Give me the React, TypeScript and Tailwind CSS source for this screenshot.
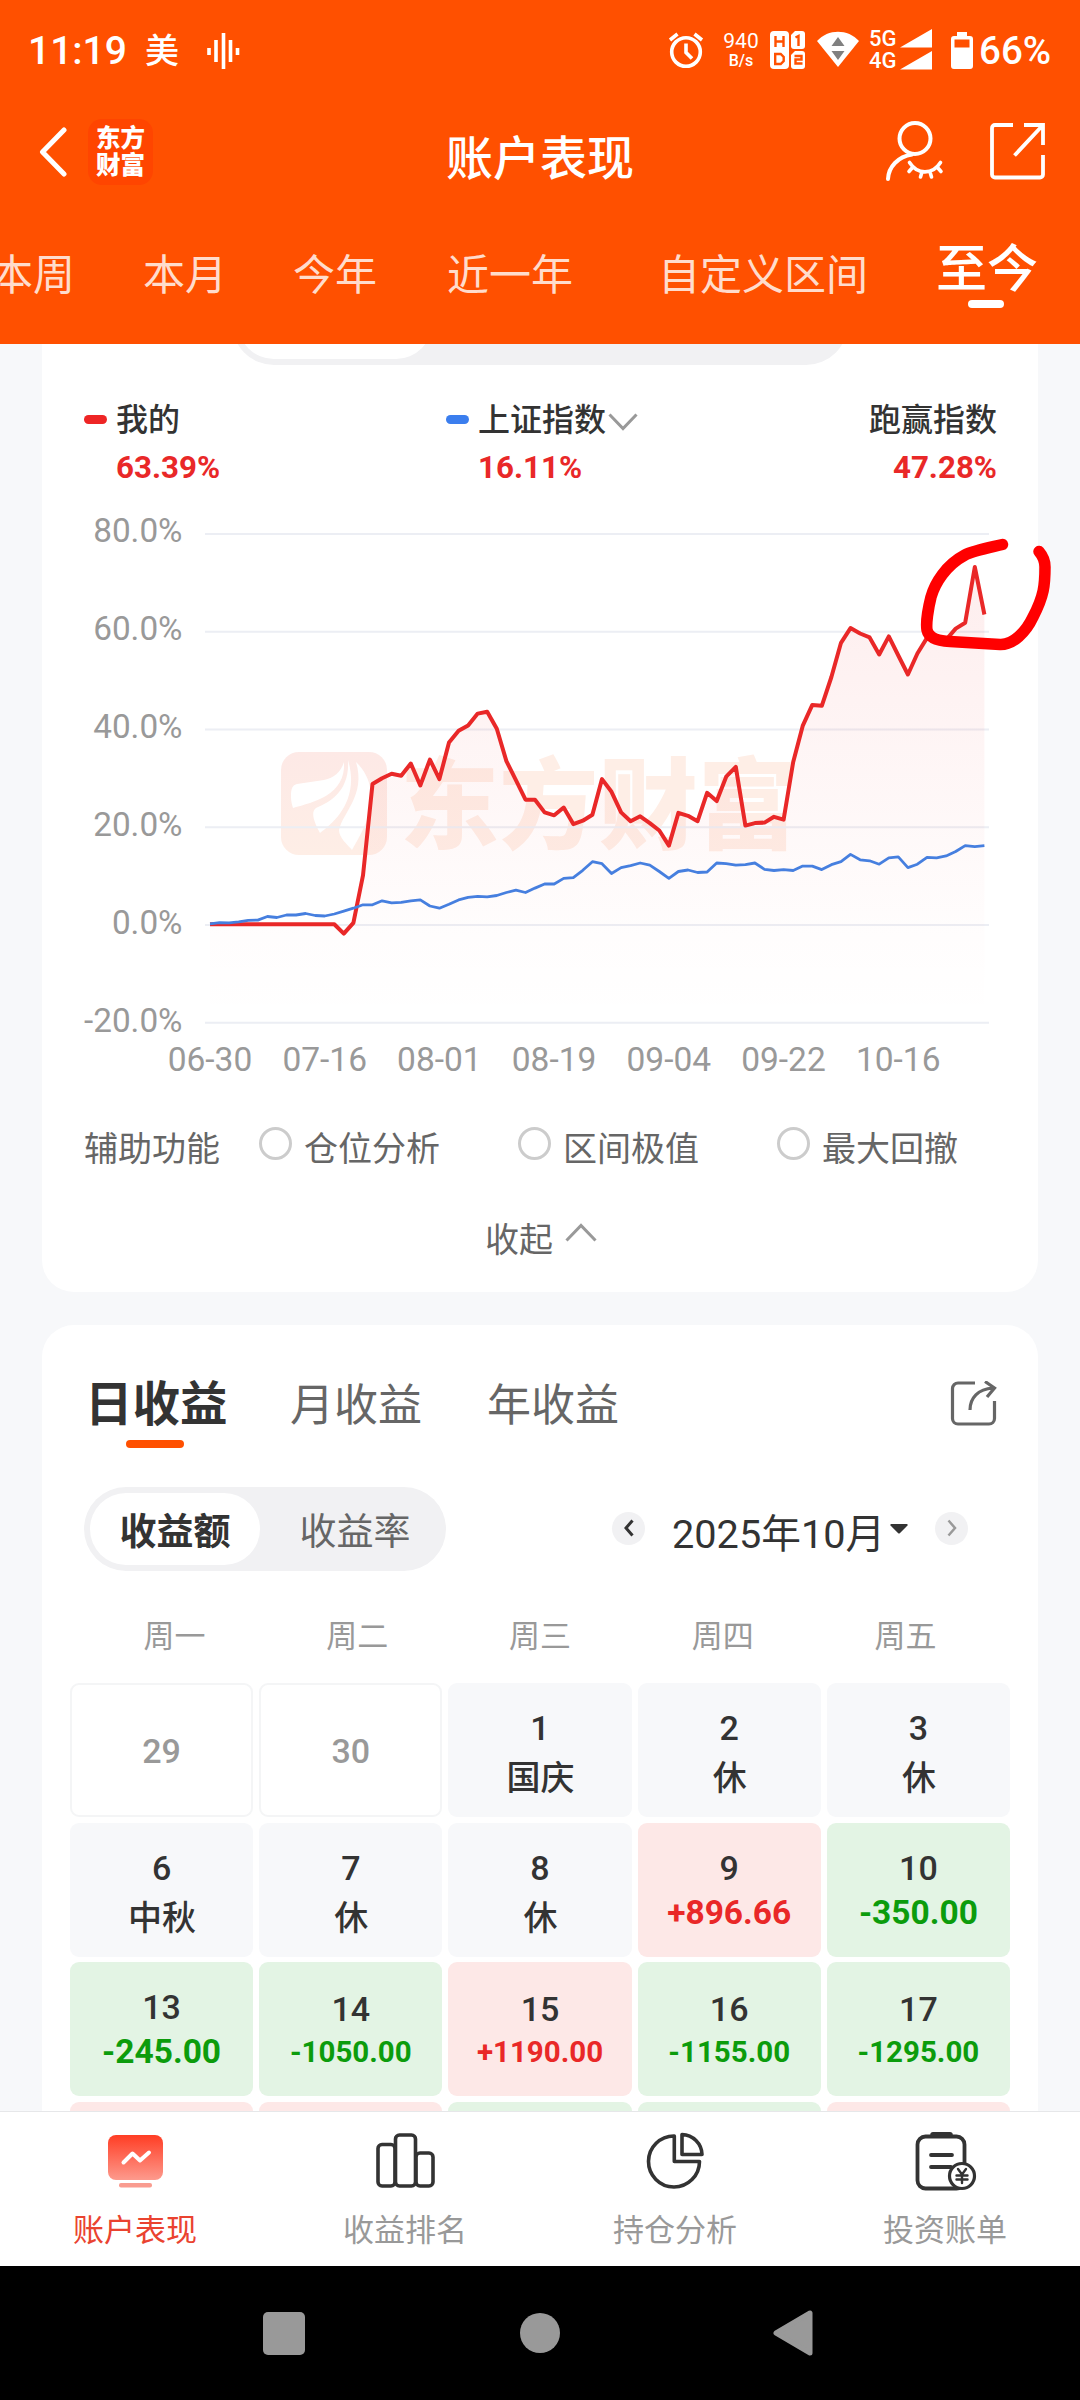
import { useState } from 'react'

const RANGES = ['本周', '本月', '今年', '近一年', '自定义区间', '至今']
const WEEKDAYS = ['周一', '周二', '周三', '周四', '周五']
const DATES = ['06-30', '07-16', '08-01', '08-19', '09-04', '09-22', '10-16']
const LEVELS = [80, 60, 40, 20, 0, -20]

const MINE = [
  0, 0, 0, 0, 0, 0, 0, 0, 0, 0, 0, 0, 0, 0, -1.9, 0.3, 10, 28.7, 29.9, 30.8, 30.4, 32.9, 28.4, 33.7, 29.7, 37.2, 39.6,
  40.7, 43.1, 43.5, 40, 33.4, 29.5, 25.5, 25.5, 22.9, 22.3, 23.9, 20.5, 21.2, 22.4, 29.7, 27.1, 22.9, 21.1, 22.1, 20.7,
  19.2, 16.1, 22.8, 22.2, 21.1, 26.9, 25.2, 30.2, 32.2, 20.2, 20.7, 20.8, 22, 21.4, 33.2, 40.6, 44.9, 44.7, 50.6, 57.6,
  60.6, 59.5, 58.7, 55.2, 58.9, 55, 51.1, 55.4, 58.6, 58.2, 58.2, 60.5, 61.7, 73.1, 63.39,
]

const INDEX = [
  0.1, 0.35, 0.3, 0.5, 0.8, 0.85, 1.6, 1.4, 1.9, 1.9, 2.2, 1.8, 1.7, 2.1, 2.7, 3.3, 4, 4, 4.8, 4.4, 4.5, 4.8, 5, 3.75,
  3.3, 4.1, 5, 5.5, 5.7, 5.6, 5.9, 6.5, 7, 6.5, 7.4, 8.25, 8.25, 9.4, 9.55, 11.05, 12.8, 12.4, 10.4, 11.6, 12, 12.55,
  12.1, 10.8, 9.4, 10.8, 11.1, 10.6, 10.7, 12.55, 12.4, 12.1, 12.2, 12.55, 11.25, 11, 11.2, 11, 11.9, 11.9, 11.2, 12.2,
  12.8, 14.3, 13.2, 13, 12.3, 13.6, 13.8, 11.6, 12.3, 13.7, 13.6, 14, 14.9, 16.1, 15.9, 16.11,
]

const DAYS: any[] = [
  { day: 29, kind: 'out' },
  { day: 30, kind: 'out' },
  { day: 1, kind: 'rest', text: '国庆' },
  { day: 2, kind: 'rest', text: '休' },
  { day: 3, kind: 'rest', text: '休' },
  { day: 6, kind: 'rest', text: '中秋' },
  { day: 7, kind: 'rest', text: '休' },
  { day: 8, kind: 'rest', text: '休' },
  { day: 9, kind: 'up', text: '+896.66' },
  { day: 10, kind: 'down', text: '-350.00' },
  { day: 13, kind: 'down', text: '-245.00' },
  { day: 14, kind: 'down', text: '-1050.00' },
  { day: 15, kind: 'up', text: '+1190.00' },
  { day: 16, kind: 'down', text: '-1155.00' },
  { day: 17, kind: 'down', text: '-1295.00' },
  { kind: 'up' },
  { kind: 'up' },
  { kind: 'down' },
  { kind: 'down' },
  { kind: 'up' },
]

const CELL: any = {
  out: 'border-2 border-[#f4f5f6] text-[#999]',
  rest: 'bg-[#f7f8fa] text-[#333]',
  up: 'bg-[#fde8e7] text-[#e92828]',
  down: 'bg-[#e3f4e4] text-[#0c9c0c]',
}

const px = (i: number) => 210 + i * 9.56
const py = (v: number) => 924.3 - v * 4.8875
const toPoints = (data: number[]) => data.map((v, i) => `${px(i).toFixed(1)},${py(v).toFixed(1)}`).join(' ')

function StatusBar() {
  return (
    <div className="flex h-[102px] items-center pl-[28px] text-white">
      <span className="w-[100px] text-[39px] leading-none font-medium">11:19</span>
      <span className="ml-[17px] w-[36px] text-[34px] leading-none font-medium">美</span>
      <svg className="ml-[25px]" width="36" height="38" viewBox="0 0 36 38" stroke="white" strokeWidth="3.6">
        <path d="M3 16v7M10 8v22M17.500 1v36M24.500 8v22M31.500 16v7" />
      </svg>
      <svg className="-mt-[3px] ml-[426px] shrink-0" width="36" height="38" viewBox="0 0 36 38" fill="none" stroke="white" strokeWidth="3.6">
        <circle cx="18" cy="21" r="14.300" />
        <path d="M18 12.500v9l6 6M2 9l7.500-6M34 9l-7.500-6" />
      </svg>
      <div className="ml-[15px] flex w-[44px] flex-col items-center">
        <span className="text-[21px] leading-[20px]">940</span>
        <span className="text-[16px] leading-[20px] font-medium">B/s</span>
      </div>
      <svg className="-mt-[3px] ml-[7px] shrink-0" width="36" height="38" viewBox="0 0 36 38">
        <rect x="0" y="0" width="19" height="38" rx="4" fill="white" />
        <path d="M21 4l4-4h7a3 3 0 0 1 3 3v12a3 3 0 0 1-3 3h-8a3 3 0 0 1-3-3z" fill="white" />
        <path d="M21 24l4-4h7a3 3 0 0 1 3 3v12a3 3 0 0 1-3 3h-8a3 3 0 0 1-3-3z" fill="white" />
        <g fill="none" stroke="#ff5000" strokeWidth="2.400">
          <path d="M5.500 5v11M13.500 5v11M5.500 10.500h8M5.200 23v10h5.500l3-3v-4l-3-3z" />
          <path d="M25.500 6.500l3-1.500v10M24.500 25h7v3.500h-6v4h7" />
        </g>
      </svg>
      <svg className="-mt-[4px] ml-[11px] shrink-0" width="42" height="36" viewBox="0 0 42 36">
        <path d="M0 10C11-2.500 31-2.500 42 10L21 36z" fill="white" />
        <path d="M21 6l6.500 9h-13zM21 29l6.500-9h-13z" fill="#808080" />
      </svg>
      <div className="-mt-[3px] ml-[10px] flex w-[29px] flex-col">
        <span className="text-[22px] leading-[22px] font-medium">5G</span>
        <span className="text-[22px] leading-[22px] font-medium">4G</span>
      </div>
      <svg className="-mt-[3px] ml-[2px] shrink-0" width="32" height="41" viewBox="0 0 32 41" fill="white">
        <path d="M32 0v18.500H0zM32 22v18.500H0z" />
      </svg>
      <svg className="-mt-[2px] ml-[19px] shrink-0" width="22" height="37" viewBox="0 0 22 37">
        <path d="M6 0h10v4h3a3 3 0 0 1 3 3v27a3 3 0 0 1-3 3H3a3 3 0 0 1-3-3V7a3 3 0 0 1 3-3h3z" fill="white" />
        <path d="M3.500 7.500h15v8h-15z" fill="#ff5000" />
      </svg>
      <span className="ml-[6px] text-[38.500px] leading-none font-medium">66%</span>
    </div>
  )
}

function TitleBar() {
  return (
    <div className="flex h-[100px] items-center pl-[38px] text-white">
      <svg width="30" height="50" viewBox="0 0 30 50" fill="none" stroke="white" strokeWidth="5" strokeLinecap="round" strokeLinejoin="round">
        <path d="M26 3L4.500 25 26 47" />
      </svg>
      <div className="ml-[20px] flex h-[66px] w-[65px] flex-col items-center justify-center rounded-[14px] bg-[#ff4500] text-[24.500px] leading-[27.500px] font-black">
        <span>东方</span>
        <span>财富</span>
      </div>
      <h1 className="ml-[293px] pt-[13px] text-[47px] leading-none font-medium">账户表现</h1>
      <svg className="ml-[251px] shrink-0" width="60" height="62" viewBox="0 0 60 62" fill="none" stroke="white" strokeWidth="4" strokeLinecap="round">
        <circle cx="30" cy="17.500" r="15.500" />
        <path d="M27 33.500C13 35.500 3.500 46 3 58" />
        <path d="M24.500 41.500c8 12.500 23 12.500 31 0M27.500 46.500l-3.500 4M37 51l-1.500 5M45 51l1.500 5M52.500 46.500l3.500 4" strokeWidth="3.600" />
      </svg>
      <svg className="-mt-[2px] ml-[45px] shrink-0" width="56" height="58" viewBox="0 0 56 58" fill="none" stroke="white" strokeWidth="3.800">
        <path d="M23 3H5a3 3 0 0 0-3 3v46.500a3 3 0 0 0 3 3h45a3 3 0 0 0 3-3V33M34 3h19v20M53 3L24.500 33.500" />
      </svg>
    </div>
  )
}

function RangeTabs() {
  const [active, setActive] = useState('至今')
  return (
    <div className="-ml-[9px] flex h-[142px] items-center gap-[68px] pt-[5px] whitespace-nowrap">
      {RANGES.map(r => (
        <button key={r} onClick={() => setActive(r)}
          className={`relative shrink-0 ${r === '自定义区间' ? 'ml-[17px]' : r === '今年' ? '-ml-[2px]' : r === '近一年' ? 'ml-[2px]' : ''} ${active === r ? '-mt-[12px] text-[51px] leading-none font-medium text-white' : 'text-[42px] leading-none text-[#ffdccc]'}`}>
          {r}
          {active === r && <span className="absolute -bottom-[13px] left-[32px] h-[8px] w-[36px] rounded-full bg-white" />}
        </button>
      ))}
    </div>
  )
}

function Chart() {
  const line = toPoints(MINE)
  return (
    <svg className="block overflow-visible" width="996" height="600" viewBox="42 490 996 600">
      <defs>
        <linearGradient id="area" gradientUnits="userSpaceOnUse" x1="0" y1="567" x2="0" y2="1022">
          <stop offset="0" stopColor="#ee2222" stopOpacity="0.080" />
          <stop offset="0.800" stopColor="#ee2222" stopOpacity="0.010" />
          <stop offset="1" stopColor="#ee2222" stopOpacity="0" />
        </linearGradient>
        <linearGradient id="mark" x1="0" y1="0" x2="0" y2="1">
          <stop offset="0" stopColor="#fde9e6" />
          <stop offset="1" stopColor="#feeee6" />
        </linearGradient>
      </defs>
      <rect x="281" y="752" width="106" height="103" rx="18" fill="url(#mark)" />
      <g fill="white">
        <path d="M344 762C341 772 334 778 324 780L297 784C291 785 291 792 291 797C291 801 292 805 293 808C314 802 346 795 344 762Z" />
        <path d="M348 760C350 790 331 802 316 808C309 813 317 827 320 833C334 823 360 800 348 760Z" />
        <path d="M356 762C366 795 343 812 339 830C339 838 348 845 352 850C360 836 366 824 369 815C373 800 373 778 356 762Z" />
      </g>
      <text x="400" y="841" fontSize="99" fontWeight="900" fill="#feeee6" textLength="397">东方财富</text>
      {LEVELS.map((v, i) => (
        <g key={v}>
          <rect x="205" y={533 + i * 97.75} width="784" height="2" fill="#eceef4" />
          <text x="182.500" y={542 + i * 97.900} textAnchor="end" fontSize="33.300" fill="#999">{v.toFixed(1)}%</text>
        </g>
      ))}
      {DATES.map((d, i) => (
        <text key={d} x={210 + i * 114.7} y="1071" textAnchor="middle" fontSize="33.500" fill="#999">{d}</text>
      ))}
      <polygon points={`210,1022 ${line} 984.400,1022`} fill="url(#area)" />
      <polyline points={line} fill="none" stroke="#e92828" strokeWidth="4" strokeLinejoin="round" />
      <polyline points={toPoints(INDEX)} fill="none" stroke="#467fdf" strokeWidth="2.800" strokeLinejoin="round" />
      <path d="M1002.500 544.500C988 548 973 551 965 555C946 565 935 583 931 597C928 609 926 624 927 630C929 639 939 641 950 641.500L1000 644.500C1013 645 1026 632 1033 617C1044 596 1045 585 1045 567C1045 560 1042 555 1039 551.500"
        fill="none" stroke="#ff0000" strokeWidth="11.500" strokeLinecap="round" strokeLinejoin="round" />
    </svg>
  )
}

function Performance() {
  return (
    <section className="h-[948px] rounded-b-[32px] bg-white">
      <div className="flex h-[21px] items-end justify-center overflow-hidden">
        <div className="flex h-[84px] w-[616px] shrink-0 rounded-full bg-[#f1f1f3] p-[6px]">
          <div className="h-[72px] w-[194px] rounded-full bg-white" />
        </div>
      </div>
      <div className="flex h-[125px] pt-[35px] pr-[41px] pl-[42px] text-[32px] leading-[40px] font-medium text-[#333]">
        <div className="flex w-[362px] gap-[9px]">
          <span className="mt-[15px] h-[9px] w-[23px] rounded-full bg-[#ee2525]" />
          <div className="flex flex-col gap-[8px]">
            <span>我的</span>
            <span className="text-[31.300px] font-bold text-[#e92828]">63.39%</span>
          </div>
        </div>
        <div className="flex gap-[9px]">
          <span className="mt-[15px] h-[9px] w-[23px] rounded-full bg-[#3b7eee]" />
          <div className="flex flex-col gap-[8px]">
            <span className="flex items-center">
              上证指数
              <svg className="mt-[3px] ml-[2px]" width="30" height="18" viewBox="0 0 30 18" fill="none" stroke="#999" strokeWidth="3">
                <path d="M1.500 1.500L15 15.500 28.500 1.500" />
              </svg>
            </span>
            <span className="text-[31.300px] font-bold text-[#e92828]">16.11%</span>
          </div>
        </div>
        <div className="ml-auto flex flex-col items-end gap-[8px]">
          <span>跑赢指数</span>
          <span className="text-[31.300px] font-bold text-[#e92828]">47.28%</span>
        </div>
      </div>
      <Chart />
      <div className="flex h-[116px] items-center pt-[2px] pl-[42px] text-[34px] leading-none text-[#666]">
        <span className="w-[175px]">辅助功能</span>
        {['仓位分析', '区间极值', '最大回撤'].map(t => (
          <span key={t} className="flex w-[259px] items-center gap-[12px]">
            <span className="-mt-[11px] h-[33px] w-[33px] rounded-full border-[3px] border-[#ccc]" />
            {t}
          </span>
        ))}
      </div>
      <div className="flex h-[66px] items-center justify-center gap-[12px] pt-[2px] pl-[2px] text-[34px] leading-none text-[#666]">
        收起
        <svg className="-mt-[14px]" width="32" height="20" viewBox="0 0 32 20" fill="none" stroke="#999" strokeWidth="3">
          <path d="M1.500 17.500L16 2.500 30.500 17.500" />
        </svg>
      </div>
    </section>
  )
}

function DayCell({ day, kind, text }: any) {
  const long = text && text.length > 7
  const amount = kind === 'up' || kind === 'down'
  return (
    <div className={`flex flex-col items-center rounded-[9px] ${CELL[kind]} ${kind === 'out' ? 'justify-center' : long ? 'pt-[27px]' : 'pt-[25px]'}`}>
      <span className={`text-[34px] leading-[40px] font-medium ${kind === 'out' ? 'pt-[2px]' : 'text-[#333]'}`}>{day}</span>
      {text && (
        <span className={`leading-[40px] ${long ? 'mt-[3px] text-[29.500px] font-bold' : amount ? 'mt-[5px] text-[33.500px] font-bold' : 'mt-[10px] pl-[1px] text-[34px] font-medium'}`}>{text}</span>
      )}
    </div>
  )
}

function Calendar() {
  const [mode, setMode] = useState('收益额')
  return (
    <section className="mt-[33px] h-[900px] rounded-t-[32px] bg-white">
      <div className="flex h-[123px] items-start pt-[56px] pl-[43px] text-[44px] leading-[48px] text-[#666]">
        <span className="relative w-[205px] text-[47.500px] font-bold text-[#333]">
          日收益
          <span className="absolute top-[59px] left-[41px] h-[8px] w-[58px] rounded-full bg-[#ff5000]" />
        </span>
        <span className="w-[197px] pt-[1px]">月收益</span>
        <span className="pt-[1px]">年收益</span>
        <svg className="ml-auto mr-[40px]" width="48" height="46" viewBox="0 0 48 46" fill="none" stroke="#666" strokeWidth="3.200">
          <path d="M25 2H8a5.500 5.500 0 0 0-5.500 5.500v30A5.500 5.500 0 0 0 8 43h31a5.500 5.500 0 0 0 5.500-5.500V20" />
          <path d="M20 29C20 17 28 8 43 7M35 .500L44.500 7 37 16" />
        </svg>
      </div>
      <div className="flex h-[162px] items-center pl-[42px]">
        <div className="flex h-[84px] w-[362px] shrink-0 items-center rounded-full bg-[#f1f1f3] p-[6px] text-[37px] leading-none">
          {['收益额', '收益率'].map(m => (
            <button key={m} onClick={() => setMode(m)}
              className={`h-[72px] shrink-0 rounded-full pt-[7px] ${m === '收益额' ? 'w-[170px]' : 'w-[190px]'} ${mode === m ? 'bg-white font-bold text-[#333]' : 'text-[#666]'}`}>
              {m}
            </button>
          ))}
        </div>
        <span className="-mt-[2px] ml-[166px] flex h-[33px] w-[33px] shrink-0 items-center justify-center rounded-full bg-[#f1f1f3]">
          <svg width="10" height="18" viewBox="0 0 10 18" fill="none" stroke="#333" strokeWidth="3"><path d="M8.500 1.500L2 9l6.500 7.500" /></svg>
        </span>
        <span className="ml-[27px] w-[213px] pt-[11px] text-[39.700px] leading-none whitespace-nowrap text-[#333]">2025年10月</span>
        <svg className="ml-[5px] shrink-0" width="18" height="10" viewBox="0 0 18 10"><path d="M1 0h16q1.500 1 0 2L10 9q-1 1-2 0L1 2Q-.500 1 1 0z" fill="#333" /></svg>
        <span className="-mt-[2px] ml-[27px] flex h-[33px] w-[33px] shrink-0 items-center justify-center rounded-full bg-[#f1f1f3]">
          <svg width="10" height="18" viewBox="0 0 10 18" fill="none" stroke="#999" strokeWidth="2.500"><path d="M1.500 1.500L8 9l-6.500 7.500" /></svg>
        </span>
      </div>
      <div className="mx-[41px] grid h-[73px] grid-cols-5 pt-[11px] text-center text-[31px] leading-[32px] text-[#999]">
        {WEEKDAYS.map(w => <span key={w}>{w}</span>)}
      </div>
      <div className="mx-[28px] grid auto-rows-[134px] grid-cols-5 gap-x-[6px] gap-y-[5.500px]">
        {DAYS.map((d, i) => <DayCell key={i} {...d} />)}
      </div>
    </section>
  )
}

function BottomTabs() {
  return (
    <nav className="grid h-[155px] grid-cols-4 border-t border-[#e6e7e9] bg-white pt-[18px] text-[31px] leading-[36px] text-[#999]">
      <div className="flex flex-col items-center gap-[21px] text-[#ea4330]">
        <svg width="60" height="62" viewBox="0 0 60 62">
          <defs>
            <linearGradient id="tab" x1="0" y1="0" x2="0" y2="1">
              <stop offset="0" stopColor="#ff3d24" />
              <stop offset="1" stopColor="#fd9a8d" />
            </linearGradient>
          </defs>
          <rect x="3" y="5" width="55" height="45" rx="8" fill="url(#tab)" />
          <rect x="14" y="53" width="33" height="4.500" rx="2" fill="#f99c90" />
          <path d="M18.500 32.500l9-9 7.500 7 9-8" fill="none" stroke="white" strokeWidth="4" strokeLinecap="round" strokeLinejoin="round" />
        </svg>
        账户表现
      </div>
      <div className="flex flex-col items-center gap-[21px]">
        <svg width="60" height="62" viewBox="0 0 60 62" fill="none" stroke="#333" strokeWidth="3.600">
          <rect x="3" y="14.500" width="17" height="41.500" rx="4" />
          <rect x="20.500" y="5" width="20" height="51" rx="4" />
          <rect x="41" y="23" width="17" height="33" rx="4" />
        </svg>
        收益排名
      </div>
      <div className="flex flex-col items-center gap-[21px]">
        <svg width="60" height="62" viewBox="0 0 60 62" fill="none" stroke="#333" strokeWidth="3.600" strokeLinejoin="round">
          <path d="M29.300 6v25.500H54.500A25.500 25.500 0 1 1 29.300 6z" />
          <path d="M37 4.500v20h20A20.500 20.500 0 0 0 37 4.500z" />
        </svg>
        持仓分析
      </div>
      <div className="flex flex-col items-center gap-[21px]">
        <svg width="64" height="62" viewBox="0 0 64 62" fill="none" stroke="#333" strokeWidth="3.800" strokeLinecap="round">
          <rect x="4.500" y="6.500" width="47" height="52" rx="8" />
          <path d="M20 4.800h17" strokeWidth="5.500" />
          <path d="M18 25h21M18 37h20" />
          <circle cx="49" cy="46" r="12.500" fill="white" strokeWidth="3.200" />
          <path d="M45 39l4 5.500 4-5.500M49 44.500V53M43.500 45.500h11M43.500 49.500h11" strokeWidth="2.400" />
        </svg>
        投资账单
      </div>
    </nav>
  )
}

export default function App() {
  return (
    <div className="flex h-[2400px] w-[1080px] flex-col overflow-hidden bg-[#f7f8fa] font-['Roboto','Noto_Sans_CJK_SC',sans-serif]">
      <header className="h-[344px] shrink-0 bg-[#ff5000]">
        <StatusBar />
        <TitleBar />
        <RangeTabs />
      </header>
      <main className="h-[1767px] shrink-0 overflow-hidden px-[42px]">
        <Performance />
        <Calendar />
      </main>
      <BottomTabs />
      <div className="flex flex-1 items-center bg-black pl-[263px]">
        <span className="h-[43px] w-[42px] rounded-[5px] bg-[#999]" />
        <span className="ml-[215px] h-[40px] w-[40px] rounded-full bg-[#999]" />
        <svg className="ml-[213px]" width="40" height="46" viewBox="0 0 40 46">
          <path d="M3 23L37 3v40z" fill="#999" stroke="#999" strokeWidth="5" strokeLinejoin="round" />
        </svg>
      </div>
    </div>
  )
}
